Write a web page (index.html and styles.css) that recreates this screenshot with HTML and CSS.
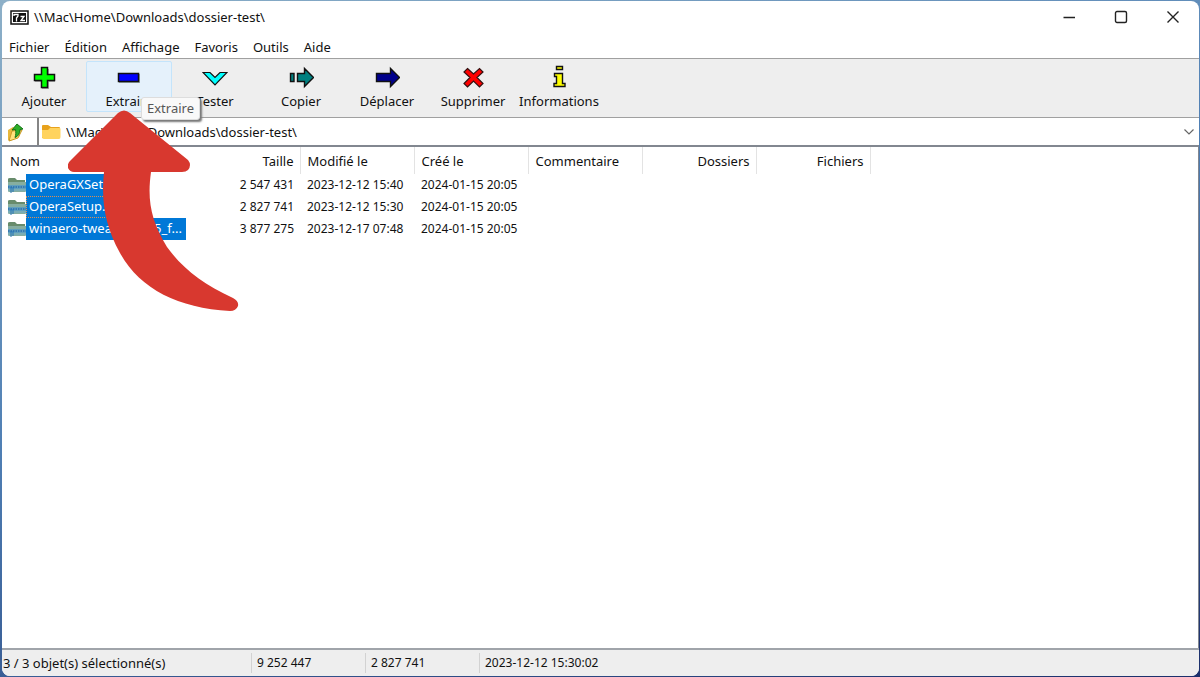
FILE: index.html
```html
<!DOCTYPE html>
<html lang="fr">
<head>
<meta charset="utf-8">
<title>\\Mac\Home\Downloads\dossier-test\</title>
<link rel="stylesheet" href="styles.css">
</head>
<body>
<svg class="defs" aria-hidden="true">
  <symbol id="zip" viewBox="0 0 19 17">
    <path d="M0 2 Q0 1 2 1 H7 L9 3 H17 V14 H0Z" fill="#688c6c"/>
    <path d="M0 5 H18 V14 Q18 15 17 15 H1 Q0 15 0 14Z" fill="#86aea0"/>
    <path d="M0 8 H18 V12 H0Z" fill="#5f9fbd"/>
    <path d="M0 10H18" stroke="#2c6eae" stroke-width="1.500" stroke-dasharray="1.500 1"/>
    <path d="M0 12 H18 V14 H0Z" fill="#7aadb5"/>
    <path d="M3 10 V16 M5 10 V15" stroke="#2473b8"/>
  </symbol>
</svg>
<div class="window">
  <header class="titlebar">
    <svg class="logo" width="19" height="15" viewBox="0 0 19 15"><rect x="1" y="1" width="17" height="13" fill="#fff" stroke="#111" stroke-width="1.500"/><rect x="3" y="3" width="13" height="9" fill="#111"/><path d="M4 6V4.500H8V6L6.500 8V11.500 M10.500 6.500H14L11 10.500H15" fill="none" stroke="#fff" stroke-width="1.300"/></svg>
    <h1 class="title">\\Mac\Home\Downloads\dossier-test\</h1>
    <div class="controls">
      <button type="button" aria-label="Réduire"><svg width="14" height="14" viewBox="0 0 14 14"><path d="M1.500 7.500H13"/></svg></button>
      <button type="button" aria-label="Agrandir"><svg width="14" height="14" viewBox="0 0 14 14"><rect x="1.500" y="1.500" width="11" height="11" rx="1.500"/></svg></button>
      <button type="button" aria-label="Fermer"><svg width="14" height="14" viewBox="0 0 14 14"><path d="M1.500 1.500L12.500 12.500M12.500 1.500L1.500 12.500"/></svg></button>
    </div>
  </header>
  <nav class="menu">
    <button type="button">Fichier</button><button type="button">Édition</button><button type="button">Affichage</button><button type="button">Favoris</button><button type="button">Outils</button><button type="button">Aide</button>
  </nav>
  <div class="toolbar">
    <button type="button" class="tool"><svg width="26" height="26" viewBox="0 0 26 26"><path d="M11 4h7v6h6v7h-6v7h-7v-7H4v-6h7z" fill="#aaa"/><path d="M10.500 2.500h6v7h7v6h-7v7h-6v-7h-7v-6h7z" fill="#0f0" stroke="#111" stroke-width="1.500"/></svg>Ajouter</button>
    <button type="button" class="tool hot"><svg width="26" height="26" viewBox="0 0 26 26"><rect x="3" y="9" width="21" height="9" fill="#9aa"/><rect x="2.500" y="8.500" width="20" height="8" fill="#00f" stroke="#111" stroke-width="1.500"/></svg>Extraire</button>
    <button type="button" class="tool"><svg width="26" height="26" viewBox="0 0 26 26"><path d="M1 7.500h7l5 5 5-5h7L13 20z" fill="#0ff" stroke="#111" stroke-width="1.200"/></svg>Tester</button>
    <button type="button" class="tool"><svg width="26" height="26" viewBox="0 0 26 26"><path d="M2.500 8.500h3.500v8h-3.500zM9.500 8.500h7v-5l9 9-9 9v-5h-7z" fill="#008080" stroke="#111" stroke-width="1.400"/></svg>Copier</button>
    <button type="button" class="tool"><svg width="26" height="26" viewBox="0 0 26 26"><path d="M2.500 8.500h14v-5l9 9-9 9v-5h-14z" fill="#00008b" stroke="#111" stroke-width="1.400"/></svg>Déplacer</button>
    <button type="button" class="tool"><svg width="26" height="26" viewBox="0 0 26 26"><path d="M7.500 3.500L13.500 9l6-5.500 3.500 3.500-6 5.500 6 6-3.500 3.500-6-6-6 6L4 18.500l6-6L4 7z" fill="#f00" stroke="#311" stroke-width="1.200"/></svg>Supprimer</button>
    <button type="button" class="tool"><svg width="26" height="26" viewBox="0 0 26 26"><path d="M10.500 1.500h6v3h-6zM8.500 8.500h8v10h2.500v3H8v-3h2.500v-7h-2z" fill="#ff0" stroke="#111" stroke-width="1.400"/></svg>Informations</button>
  </div>
  <div class="address">
    <button type="button" class="up" aria-label="Dossier parent"><svg width="18" height="20" viewBox="0 0 18 20"><path d="M1 8l5-3 2 1 5-2v10L3 19l-2-1z" fill="#e9b83b"/><path d="M5 9l10-1-4 8-9 3z" fill="#ffe17c" stroke="#cb9827"/><path d="M5 8L10 2l6 5-3 .5c0 4-2 7-5 8 1-3 1-5 .5-8z" fill="#2caf28" stroke="#157317"/></svg></button>
    <div class="path">
      <svg width="19" height="16" viewBox="0 0 19 16"><path d="M0 2Q0 1 1 1H6L9 3H17Q18 3 18 4V14H0Z" fill="#e8a21c"/><path d="M0 6H6L8 4H17.500Q18.500 4 18.500 5V13Q18.500 15 17 15H2Q0 15 0 13Z" fill="#ffd35e"/></svg>
      <input type="text" aria-label="Chemin" value="\\Mac\Home\Downloads\dossier-test\">
      <button type="button" class="drop" aria-label="Historique"><svg width="12" height="8" viewBox="0 0 12 8"><path d="M1.500 1.500L6 6l4.500-4.500"/></svg></button>
    </div>
  </div>
  <main class="list">
    <table class="files">
      <colgroup><col class="name-col"><col class="col"><col class="col"><col class="col"><col class="col"><col class="col"><col class="col"></colgroup>
      <thead><tr><th>Nom</th><th class="num">Taille</th><th>Modifié le</th><th>Créé le</th><th>Commentaire</th><th class="num">Dossiers</th><th class="num">Fichiers</th></tr></thead>
      <tbody>
        <tr><td class="name"><div><svg width="19" height="17"><use href="#zip"/></svg><span>OperaGXSetup.zip</span></div></td><td class="num">2 547 431</td><td>2023-12-12 15:40</td><td>2024-01-15 20:05</td><td></td><td></td><td></td></tr>
        <tr><td class="name focus"><div><svg width="19" height="17"><use href="#zip"/></svg><span>OperaSetup.zip</span></div></td><td class="num">2 827 741</td><td>2023-12-12 15:30</td><td>2024-01-15 20:05</td><td></td><td></td><td></td></tr>
        <tr><td class="name wide"><div><svg width="19" height="17"><use href="#zip"/></svg><span>winaero-tweaker-1.55_f...</span></div></td><td class="num">3 877 275</td><td>2023-12-17 07:48</td><td>2024-01-15 20:05</td><td></td><td></td><td></td></tr>
      </tbody>
    </table>
  </main>
  <footer class="status"><span class="count">3 / 3 objet(s) sélectionné(s)</span><span>9 252 447</span><span>2 827 741</span><span class="date">2023-12-12 15:30:02</span></footer>
</div>
<div class="tooltip" role="tooltip">Extraire</div>
<svg class="arrow" width="172" height="203" viewBox="0 0 172 203" aria-hidden="true"><path d="M50 4Q56 -1 62 4L120 51Q124 56 120 61Q118 63 114 63H83C79 91 83 112 99 138C115 160 135 175 165 189Q171 192 170 197Q168 202 162 202C110 199 72 180 52 144C37 117 33 92 36 63H6Q2 63 0 59Q-1 54 3 51Z" fill="#d8382f"/></svg>
</body>
</html>
```
FILE: styles.css
```css
* { box-sizing: border-box; }
html, body { height: 100%; margin: 0; }
body {
  position: relative;
  padding: 1px 1px 1px 2px;
  background: linear-gradient(165deg, #8db0c8, #4f7fb4 45%, #1b2f6b);
  font: 13px/20px "Noto Sans", "Open Sans", sans-serif;
  color: #111;
}
button, input { font: inherit; color: inherit; border: 0; padding: 0; margin: 0; background: none; }
svg { display: block; flex: none; }
.defs { position: absolute; width: 0; height: 0; }
.window {
  display: flex;
  flex-direction: column;
  height: 100%;
  overflow: hidden;
  border-radius: 8px;
  background: #fff;
}
.titlebar { display: flex; align-items: center; height: 32px; padding-left: 8px; }
.title { margin: 0 0 0 5px; font-size: 13px; font-weight: 400; }
.controls { display: flex; margin-left: auto; }
.controls button { display: grid; place-items: center; width: 52px; height: 32px; }
.controls svg { fill: none; stroke: #222; stroke-width: 1.4; }
.menu { display: flex; gap: 15px; height: 26px; padding: 2px 7px 0; border-bottom: 1px solid #a0a0a0; }
.toolbar {
  display: grid;
  grid-template-columns: 84px repeat(6, 86px);
  height: 59px;
  padding-top: 2px;
  background: #eee;
  border-bottom: 1px solid #a0a0a0;
}
.tool {
  display: flex;
  flex-direction: column;
  align-items: center;
  height: 51px;
  padding-top: 3px;
  border: 1px solid transparent;
  border-radius: 2px;
  white-space: nowrap;
}
.tool.hot { background: #e5f1fb; border-color: #c4e4fb; }
.address { display: flex; height: 27px; }
.up { display: grid; place-items: center; width: 28px; }
.path {
  display: flex;
  flex: 1;
  align-items: center;
  margin-left: 7px;
  padding: 0 4px 0 3px;
  border-left: 2px solid #858585;
}
.path input { flex: 1; min-width: 0; margin-left: 5px; outline: 0; }
.drop svg { fill: none; stroke: #666; stroke-width: 1.2; }
.list { flex: 1; min-height: 0; overflow: hidden; border-top: 2px solid #828790; border-right: 1px solid #828790; }
.files { table-layout: fixed; width: 868px; border-collapse: collapse; }
.name-col { width: 184px; }
.col { width: 114px; }
th, td { padding: 0 7px; text-align: left; font-weight: 400; white-space: nowrap; }
th { height: 27px; border-right: 1px solid #e3e3e3; }
th:first-child { border-color: transparent; padding-left: 8px; }
td { height: 22px; font-size: 12px; }
th.num, td.num { padding-right: 6px; text-align: right; }
td.name { padding: 0 0 0 6px; font-size: 13px; }
.name div { display: flex; align-items: center; }
.name span { height: 22px; padding: 0 2px 0 3px; background: #0078d7; color: #fff; line-height: 20px; }
.name svg { margin-right: -1px; }
.focus span { border: 1px dotted #e09050; padding: 0 1px 0 2px; line-height: 18px; }
.wide span { flex: 1; }
.status {
  display: flex;
  align-items: center;
  height: 28px;
  background: #eee;
  border-top: 2px solid #a0a4aa;
  font-size: 12px;
}
.status span { width: 114px; padding-left: 5px; border-left: 1px solid #d2d2d2; }
.status .count { width: 249px; padding-left: 1px; border: 0; font-size: 13px; }
.status .date { width: auto; }
.tooltip {
  position: absolute;
  left: 141px;
  top: 97px;
  padding: 0 5px 1px;
  border: 1px solid #ddd;
  border-radius: 3px;
  background: #f9f9f9;
  box-shadow: 2px 2px 2px #777;
  color: #575757;
}
.arrow { position: absolute; left: 68px; top: 109px; }
```
